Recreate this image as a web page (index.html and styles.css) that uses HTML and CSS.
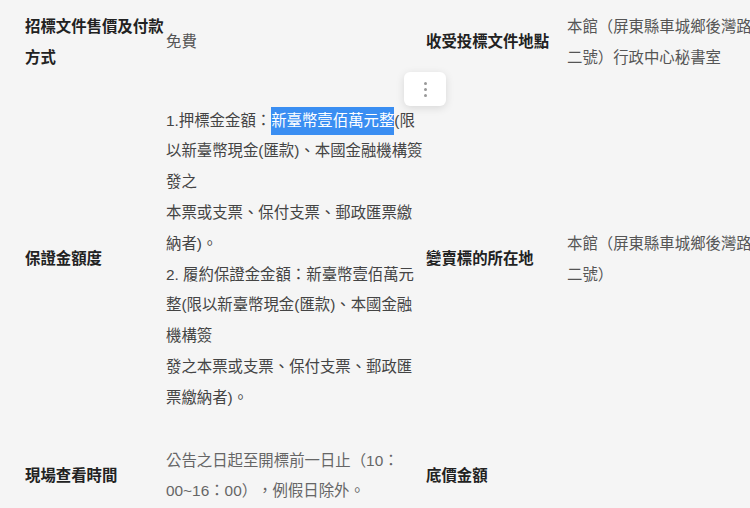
FILE: index.html
```html
<!DOCTYPE html>
<html lang="zh-Hant">
<head>
<meta charset="utf-8">
<title>標售資訊</title>
<link rel="stylesheet" href="styles.css">
</head>
<body>
<div class="sheet">
  <div class="info-grid">
    <div class="label">招標文件售價及付款<br>方式</div>
    <div class="value">免費</div>
    <div class="label">收受投標文件地點</div>
    <div class="value">本館（屏東縣車城鄉後灣路<br>二號）行政中心秘書室</div>

    <div class="label">保證金額度</div>
    <div class="value value-dark">1.押標金金額：<span class="selected">新臺幣壹佰萬元整</span>(限<br>以新臺幣現金(匯款)、本國金融機構簽<br>發之<br>本票或支票、保付支票、郵政匯票繳<br>納者)。<br>2. 履約保證金金額：新臺幣壹佰萬元<br>整(限以新臺幣現金(匯款)、本國金融<br>機構簽<br>發之本票或支票、保付支票、郵政匯<br>票繳納者)。</div>
    <div class="label">變賣標的所在地</div>
    <div class="value">本館（屏東縣車城鄉後灣路<br>二號）</div>

    <div class="label">現場查看時間</div>
    <div class="value value-light">公告之日起至開標前一日止（10：<br>00~16：00），例假日除外。</div>
    <div class="label">底價金額</div>
    <div class="value"></div>
  </div>
  <div class="more-menu" aria-label="更多">
    <span class="dot"></span><span class="dot"></span><span class="dot"></span>
  </div>
</div>
</body>
</html>
```
FILE: styles.css
```css
html {
  overflow: hidden;
}
body {
  margin: 0;
  background: #f5f5f5;
  font-family: "Liberation Sans", "Noto Sans CJK TC", sans-serif;
  font-size: 15.4px;
  line-height: 30.8px;
  color: #555;
  text-spacing-trim: space-all;
}
.sheet {
  position: relative;
  width: 780px;
  padding: 12px 0 0 25px;
}
.info-grid {
  display: grid;
  grid-template-columns: 141px 260px 141px 200px;
  row-gap: 32px;
  align-items: center;
}
.label {
  font-weight: bold;
  color: #222;
  white-space: nowrap;
}
.value {
  white-space: nowrap;
  color: #555;
}
.value-dark {
  color: #444;
}
.value-light {
  color: #666;
}
.selected {
  display: inline-block;
  line-height: 28px;
  background: #3a8ef2;
  color: #fff;
}
.more-menu {
  position: absolute;
  left: 404px;
  top: 72px;
  width: 42px;
  height: 34px;
  background: #fff;
  border-radius: 6px;
  box-shadow: 0 2px 8px rgba(0, 0, 0, 0.12);
  display: flex;
  flex-direction: column;
  align-items: center;
  justify-content: center;
  gap: 3px;
}
.dot {
  width: 3px;
  height: 3px;
  border-radius: 50%;
  background: #999;
}
```
